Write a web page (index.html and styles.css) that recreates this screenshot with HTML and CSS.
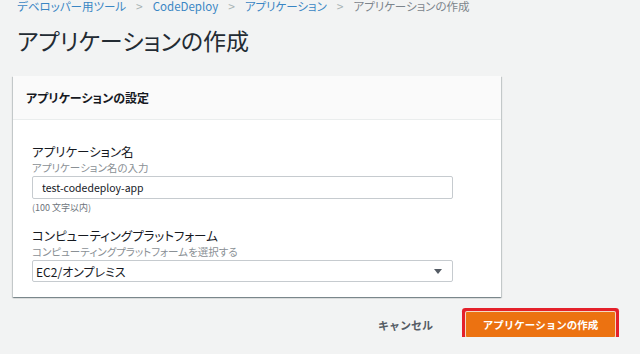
FILE: index.html
```html
<!DOCTYPE html>
<html lang="ja">
<head>
    <meta charset="UTF-8">
    <meta name="viewport" content="width=device-width, initial-scale=1.0">
    <title>アプリケーションの作成</title>
    <link rel="stylesheet" href="styles.css">
</head>
<body>
    <div class="page">
        <nav class="breadcrumb">
            <a href="#">デベロッパー用ツール</a>
            <span class="sep">&gt;</span>
            <a href="#">CodeDeploy</a>
            <span class="sep">&gt;</span>
            <a href="#">アプリケーション</a>
            <span class="sep">&gt;</span>
            <span class="current">アプリケーションの作成</span>
        </nav>

        <h1 class="page-title">アプリケーションの作成</h1>

        <div class="card">
            <div class="card-header">
                <h2>アプリケーションの設定</h2>
            </div>
            <div class="card-body">
                <div class="field">
                    <label class="field-label" for="app-name">アプリケーション名</label>
                    <div class="field-desc">アプリケーション名の入力</div>
                    <input class="text-input" id="app-name" type="text" value="test-codedeploy-app">
                    <div class="field-hint">(100 文字以内)</div>
                </div>
                <div class="field">
                    <label class="field-label" for="platform">コンピューティングプラットフォーム</label>
                    <div class="field-desc">コンピューティングプラットフォームを選択する</div>
                    <div class="select" id="platform">
                        <span>EC2/オンプレミス</span>
                        <span class="caret"></span>
                    </div>
                </div>
            </div>
        </div>

        <div class="actions">
            <button class="cancel-button">キャンセル</button>
            <button class="primary-button">アプリケーションの作成</button>
        </div>
    </div>
</body>
</html>
```

FILE: styles.css
```css
body {
    margin: 0;
    background-color: #f2f3f3;
    font-family: "Noto Sans CJK JP", "Noto Sans", sans-serif;
    font-feature-settings: "palt";
    color: #16191f;
    overflow: hidden;
}

.page {
    padding: 0 25px 0 13px;
}

.breadcrumb {
    margin-top: -2px;
    padding-left: 4px;
    font-size: 11.5px;
    line-height: 16px;
    display: flex;
    align-items: center;
    gap: 10px;
}

.breadcrumb a {
    color: #3a86c4;
    text-decoration: none;
}

.breadcrumb .sep {
    color: #a9b3b5;
    font-size: 12px;
}

.breadcrumb .current {
    color: #7d858c;
}

.page-title {
    margin: 11px 0 0 4px;
    font-size: 23px;
    line-height: 30px;
    font-weight: 400;
    color: #232b33;
}

.card {
    width: 488px;
    margin-top: 21px;
    background-color: #fff;
    box-shadow: 0 1px 1px 0 rgba(0, 28, 36, 0.3), 1px 1px 1px 0 rgba(0, 28, 36, 0.15), -1px 1px 1px 0 rgba(0, 28, 36, 0.15);
}

.card-header {
    height: 43px;
    display: flex;
    align-items: center;
    padding-left: 13px;
    background-color: #fafafa;
    border-bottom: 1px solid #eaeded;
}

.card-header h2 {
    margin: 0;
    font-size: 12px;
    font-weight: 700;
    color: #16191f;
}

.card-body {
    padding: 23px 48px 15px 19px;
}

.field + .field {
    margin-top: 13px;
}

.field-label {
    display: block;
    font-size: 12.5px;
    line-height: 18px;
    color: #16191f;
}

.field-desc {
    font-size: 10.5px;
    line-height: 13px;
    color: #8a9095;
}

.text-input,
.select {
    display: flex;
    align-items: center;
    box-sizing: border-box;
    width: 421px;
    height: 23px;
    margin-top: 2px;
    padding: 0 9px;
    border: 1px solid #c6cbcf;
    border-radius: 2px;
    background-color: #fff;
    font-family: inherit;
    font-size: 10.5px;
    color: #16191f;
}

.select {
    justify-content: space-between;
    height: 22px;
    padding: 0 10px 0 3px;
    font-size: 12px;
}

.caret {
    width: 0;
    height: 0;
    border-left: 4px solid transparent;
    border-right: 4px solid transparent;
    border-top: 5px solid #545b64;
}

.field-hint {
    font-size: 9px;
    line-height: 12px;
    margin-top: 3px;
    color: #6d747b;
}

.actions {
    display: flex;
    justify-content: flex-end;
    align-items: center;
    gap: 17px;
    margin-top: 15px;
}

.cancel-button {
    padding: 0 16px;
    border: none;
    background: none;
    font-family: inherit;
    font-size: 11px;
    font-weight: 700;
    color: #545b64;
}

.primary-button {
    width: 149px;
    height: 25px;
    border: none;
    border-radius: 1px;
    background-color: #ec7211;
    font-family: inherit;
    font-size: 10.5px;
    font-weight: 700;
    color: #fff;
    box-shadow: 0 0 0 1px #f3d9c4, 0 0 0 4px #e4202a;
}
```
